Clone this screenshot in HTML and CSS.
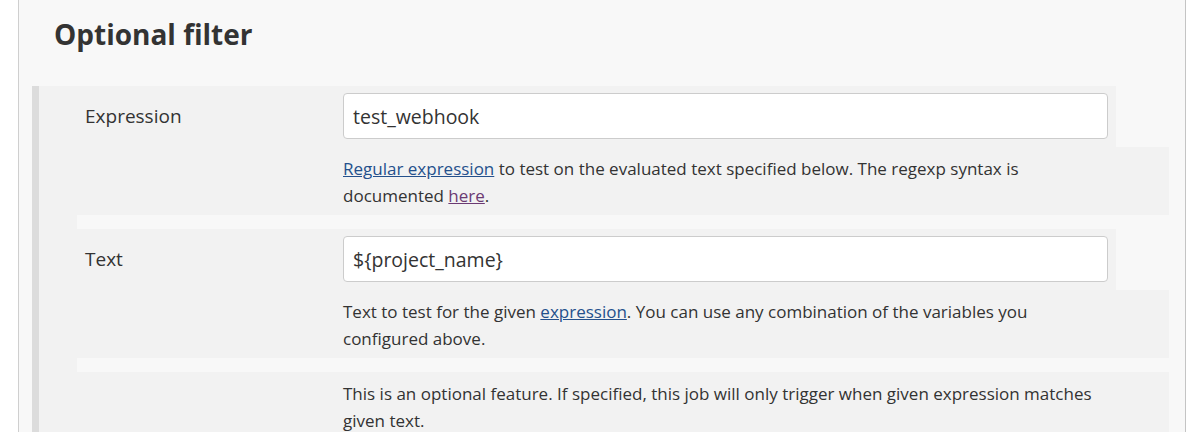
FILE: index.html
```html
<!DOCTYPE html>
<html lang="en">
<head>
<meta charset="utf-8">
<title>Optional filter</title>
<link rel="stylesheet" href="styles.css">
</head>
<body>
<div class="page">
  <h2 class="section-title">Optional filter</h2>
  <div class="optional-block">
    <div class="leftspace"></div>
    <div class="rows">
      <div class="setting">
        <div class="setting-name">Expression</div>
        <div class="setting-main"><input class="text-input" type="text" value="test_webhook"></div>
      </div>
      <div class="help"><a class="link" href="#">Regular expression</a><span> to test on the evaluated text specified below. The regexp syntax is</span> <span>documented</span> <a class="link visited" href="#">here</a><span>.</span></div>
      <div class="gap"></div>
      <div class="setting">
        <div class="setting-name">Text</div>
        <div class="setting-main"><input class="text-input" type="text" value="${project_name}"></div>
      </div>
      <div class="help"><span>Text to test for the given</span> <a class="link" href="#">expression</a><span>. You can use any combination of the variables you</span> <span>configured above.</span></div>
      <div class="gap"></div>
      <div class="help">This is an optional feature. If specified, this job will only trigger when given expression matches given text.</div>
    </div>
  </div>
</div>
</body>
</html>
```
FILE: styles.css
```css
html, body {
  margin: 0;
  padding: 0;
  background: #ffffff;
  height: 100%;
  overflow: hidden;
}
body {
  font-family: "Open Sans", "Noto Sans", sans-serif;
  color: #333333;
}
.page {
  margin-left: 18px;
  width: 1166px;
  min-height: 100%;
  background: #f8f8f8;
  border-left: 1px solid #cfcfcf;
  border-right: 1px solid #c4c4c4;
}
.section-title {
  margin: 0;
  padding: 15px 0 33px 35px;
  font-size: 28px;
  line-height: 38px;
  font-weight: 700;
  color: #333333;
}
.optional-block {
  margin-left: 13px;
  display: flex;
  border-left: 7px solid #dcdcdc;
}
.leftspace {
  width: 38px;
  flex: none;
  background: #f2f2f2;
}
.rows {
  width: 1092px;
  display: flex;
  flex-direction: column;
}
.setting {
  width: 1039px;
  height: 61px;
  display: flex;
  background: #f2f2f2;
}
.setting-name {
  width: 258px;
  flex: none;
  padding: 17px 0 0 8px;
  font-size: 19px;
  line-height: 26px;
}
.setting-main {
  flex: 1;
  padding: 7px 8px 0 0;
}
.text-input {
  box-sizing: border-box;
  display: block;
  width: 765px;
  height: 46px;
  margin: 0;
  padding: 0 9px;
  border: 1px solid #cccccc;
  border-radius: 4px;
  background: #ffffff;
  font-family: "Open Sans", "Noto Sans", sans-serif;
  font-size: 19.5px;
  color: #333333;
  outline: none;
}
.help {
  background: #f2f2f2;
  padding: 8px 69px 6px 266px;
  font-size: 17px;
  line-height: 27px;
  min-height: 54px;
}
.help:last-child {
  flex: 1;
}
.gap {
  height: 14px;
}
.link {
  color: #24508c;
  text-decoration: underline;
}
.link.visited {
  color: #6b3a73;
}
```
